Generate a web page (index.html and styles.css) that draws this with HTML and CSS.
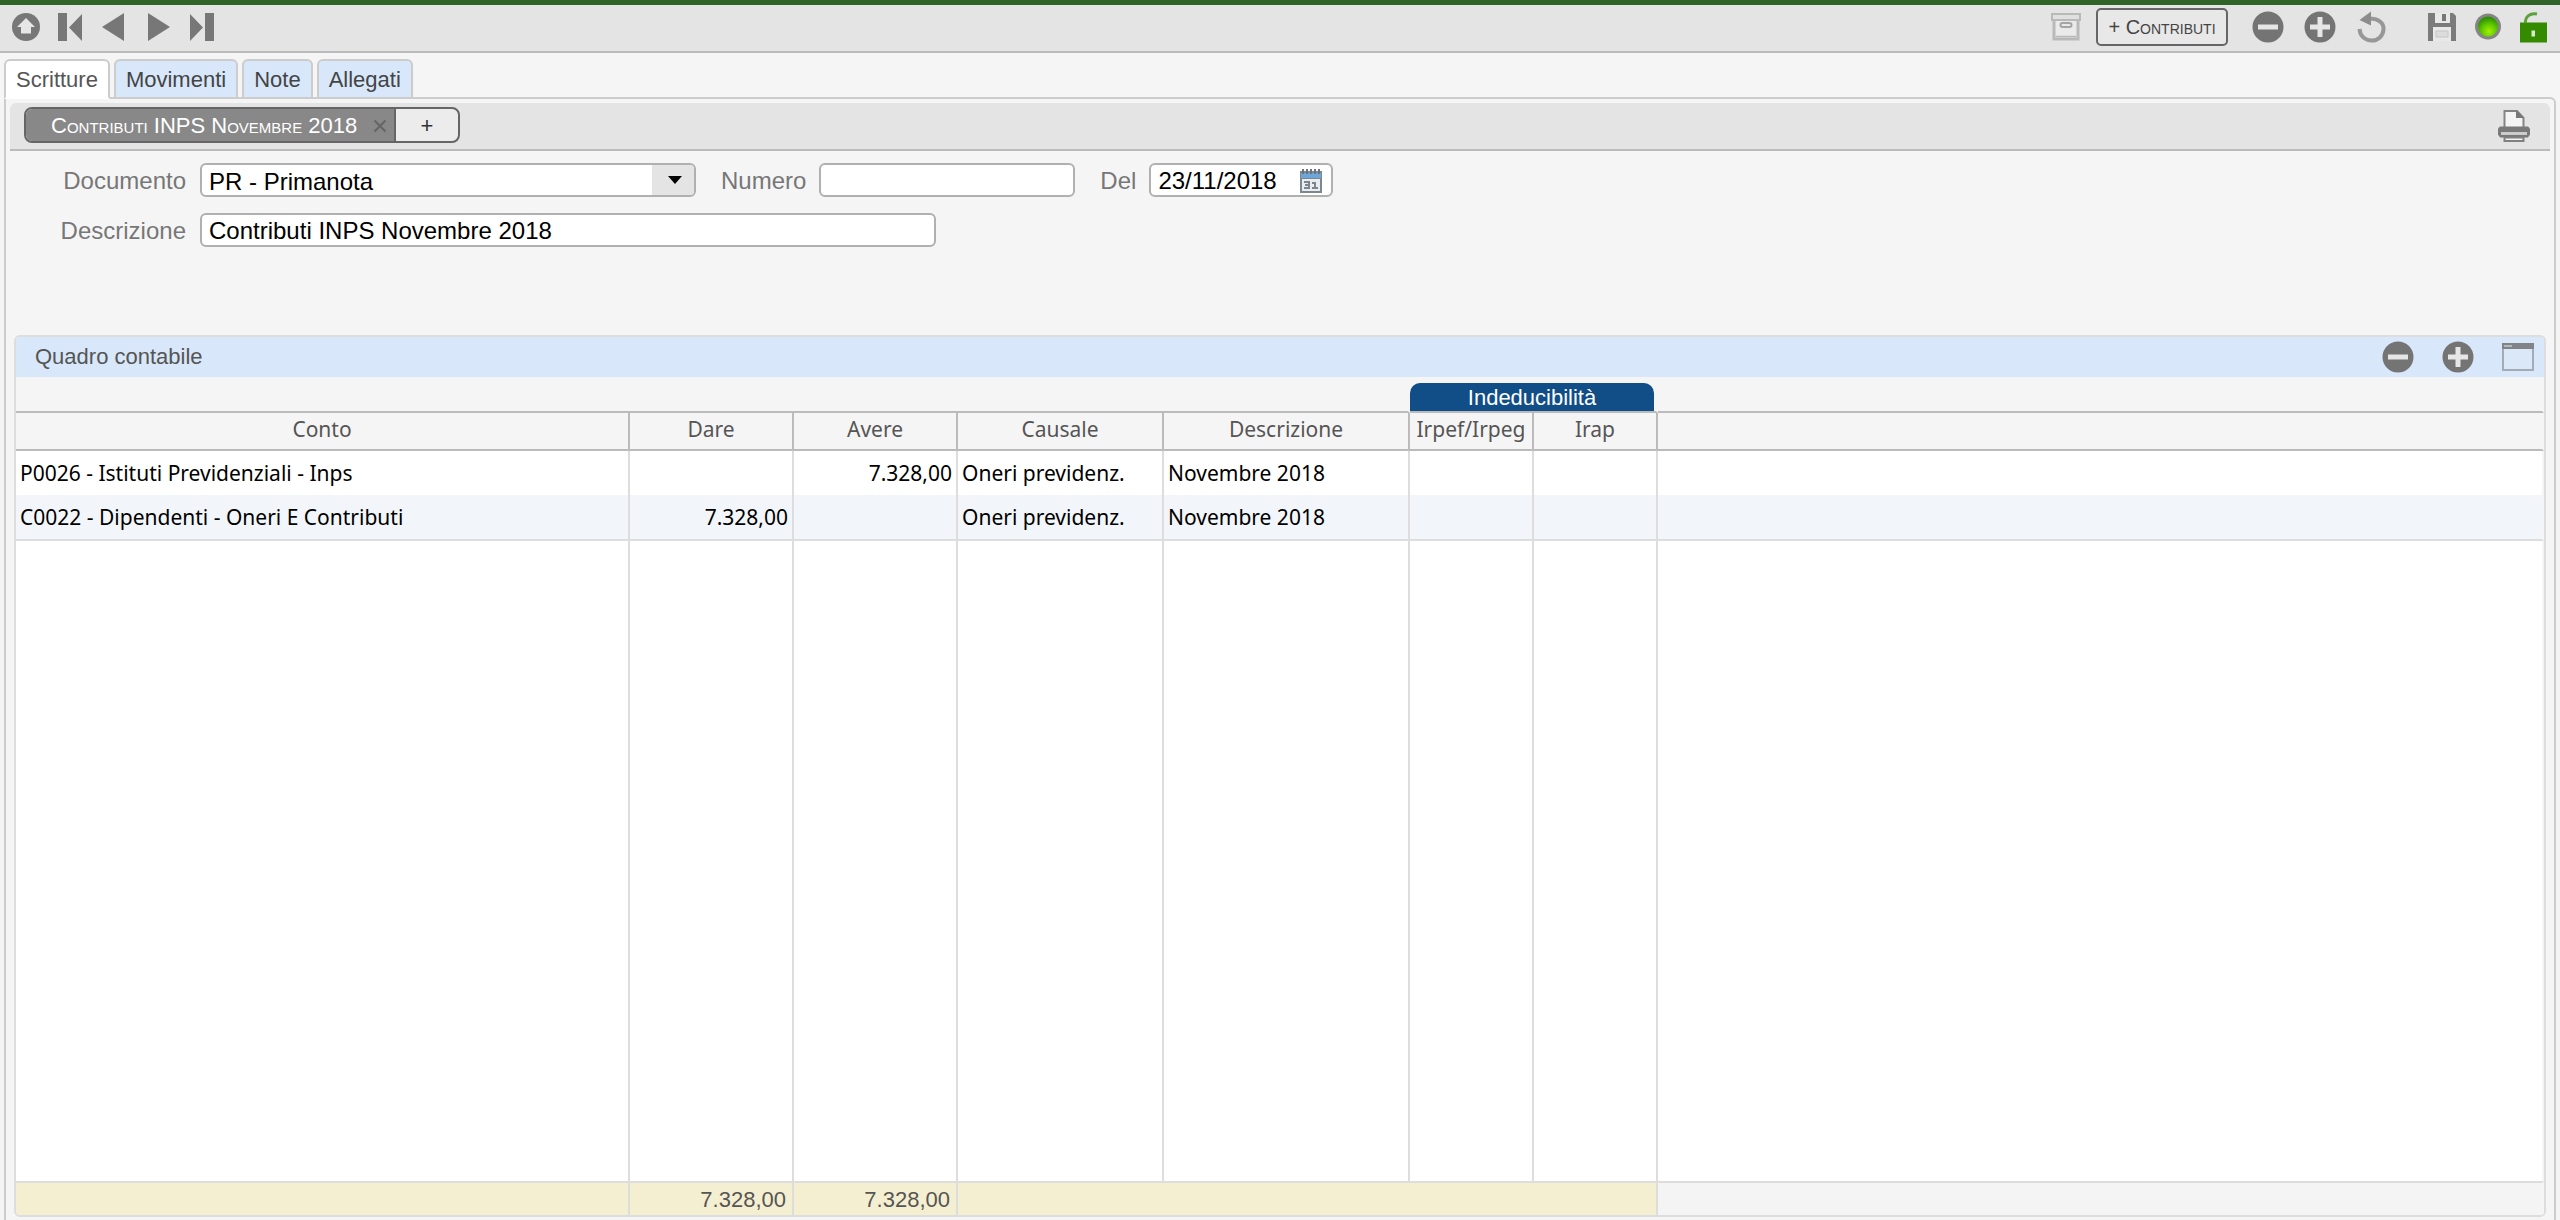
FILE: index.html
```html
<!DOCTYPE html>
<html lang="it">
<head>
<meta charset="utf-8">
<title>Prima nota</title>
<link rel="stylesheet" href="styles.css">
</head>
<body>
<svg class="symbols" aria-hidden="true">
  <symbol id="minus" viewBox="0 0 32 32"><circle cx="16" cy="16" r="15.5" fill="#747474"/><path d="M6 13.500h20v5H6z" fill="#e6e6e6"/></symbol>
  <symbol id="plus" viewBox="0 0 32 32"><circle cx="16" cy="16" r="15.500" fill="#747474"/><path d="M13.500 6h5v7.500H26v5h-7.500V26h-5v-7.500H6v-5h7.500z" fill="#e6e6e6"/></symbol>
</svg>
<div class="topline"></div>
<header class="toolbar">
  <nav class="nav-buttons" aria-label="Navigazione">
    <button class="icon-button" aria-label="Su"><svg class="icon-nav" viewBox="0 0 28 28"><circle cx="14" cy="14" r="14" fill="#777"/><path d="M14 5l9 9h-4v6.500H9V14H5z" fill="#e6e6e6"/></svg></button>
    <button class="icon-button" aria-label="Primo"><svg class="icon-nav" viewBox="0 0 28 28" fill="#777"><path d="M2 0h9v28H2zM26 1v27L13 14.500z"/></svg></button>
    <button class="icon-button" aria-label="Precedente"><svg class="icon-nav" viewBox="0 0 28 28" fill="#777"><path d="M24 0v28L2 14z"/></svg></button>
    <button class="icon-button" aria-label="Successivo"><svg class="icon-nav" viewBox="0 0 28 28" fill="#777"><path d="M4 0v28l22-14z"/></svg></button>
    <button class="icon-button" aria-label="Ultimo"><svg class="icon-nav" viewBox="0 0 28 28" fill="#777"><path d="M17 0h9v28h-9zM2 1v27l13-13.500z"/></svg></button>
  </nav>
  <div class="actions">
    <button class="icon-button" aria-label="Archivio"><svg class="icon" viewBox="0 0 32 32" fill="none" stroke="#b9b9b9"><path d="M2 3h28v6H2z" stroke-width="2" fill="#e0e0e0"/><path d="M4 10v18h24V10" stroke-width="3" fill="#eaeaea"/><path d="M6 25.500h20" stroke-width="1.500"/><rect x="10.500" y="12" width="11" height="4" rx="2" stroke="#a5a5a5" stroke-width="2"/></svg></button>
    <button class="text-button">+ Contributi</button>
    <div class="action-group">
      <button class="icon-button" aria-label="Rimuovi"><svg class="icon"><use href="#minus"/></svg></button>
      <button class="icon-button" aria-label="Aggiungi"><svg class="icon"><use href="#plus"/></svg></button>
      <button class="icon-button" aria-label="Annulla"><svg class="icon" viewBox="0 0 32 32"><path d="M13 7.500c9 0 15 4 14.500 11C27 25 22 29.500 16 29.500 9 29.500 4 25 3.500 18" fill="none" stroke="#979797" stroke-width="4"/><path d="M3.500 9L15 .5v14z" fill="#8c8c8c"/></svg></button>
    </div>
    <div class="status-group">
      <button class="icon-button" aria-label="Salva"><svg class="icon" viewBox="0 0 32 32"><path d="M2 2h25l3 3v25H2z" fill="#7b7b7b"/><path d="M9 2h15v10H9zM7 16h18v14H7z" fill="#e8e8e8"/><path d="M16 3h4v7h-4z" fill="#777"/><path d="M10 20h12v6H10z" fill="#dcdcdc" stroke="#c4c4c4"/></svg></button>
      <button class="icon-button" aria-label="Stato"><svg class="icon" viewBox="0 0 32 32"><defs><radialGradient id="led" cx=".55" cy=".75" r=".7"><stop offset="0" stop-color="#a4f000"/><stop offset=".5" stop-color="#62cb00"/><stop offset="1" stop-color="#2d8f05"/></radialGradient></defs><circle cx="16" cy="15.500" r="13" fill="#858585"/><circle cx="16" cy="15.500" r="10" fill="url(#led)"/></svg></button>
      <button class="icon-button" aria-label="Sbloccato"><svg class="icon" viewBox="0 0 32 32"><path d="M2 11.500h27v20H2z" fill="#358b00"/><path d="M7.500 12C7 6 12 1.500 19 3" fill="none" stroke="#5ba03a" stroke-width="3"/><path d="M13.500 19.500h3.500v6h-3.500z" fill="#d8e8cf"/></svg></button>
    </div>
  </div>
</header>

<nav class="tabs" aria-label="Sezioni">
  <a class="tab tab-active" href="#scritture">Scritture</a>
  <a class="tab" href="#movimenti">Movimenti</a>
  <a class="tab" href="#note">Note</a>
  <a class="tab" href="#allegati">Allegati</a>
</nav>

<main class="panel" id="scritture">
  <div class="entry-bar">
    <div class="segments">
      <button class="segment segment-active"><span>Contributi INPS Novembre 2018</span><svg class="close" viewBox="0 0 14 14"><path d="M1.500 1.500l11 11M12.500 1.500l-11 11" stroke="#656565" stroke-width="2"/></svg></button>
      <button class="segment segment-add">+</button>
    </div>
    <button class="icon-button" aria-label="Stampa"><svg class="icon" viewBox="0 0 32 32"><path d="M6.500 17V1H19l6.500 7v9" fill="#f4f4f4" stroke="#848484" stroke-width="2"/><path d="M18 0l8 8h-8z" fill="#777"/><path d="M2 16.500h28l2 2v6l-2 3H2l-2-3v-6z" fill="#797979"/><path d="M3 22h26v3H3z" fill="#ccc"/><path d="M6.500 27.500h19V31h-19z" fill="#f4f4f4" stroke="#808080" stroke-width="2"/></svg></button>
  </div>

  <form class="form">
    <div class="form-row">
      <label class="label label-first" for="documento">Documento</label>
      <div class="field field-document">
        <select id="documento" class="control"><option>PR - Primanota</option></select>
        <span class="arrow"><svg class="arrow-icon" viewBox="0 0 14 8"><path d="M0 0h14L7 8z"/></svg></span>
      </div>
      <label class="label" for="numero">Numero</label>
      <div class="field field-number"><input id="numero" class="control" type="text"></div>
      <label class="label" for="data">Del</label>
      <div class="field field-date">
        <input id="data" class="control" type="text" value="23/11/2018">
        <button type="button" class="icon-button calendar" aria-label="Calendario"><svg class="calendar-icon" viewBox="0 0 24 24"><path d="M1 2h22v22H1z" fill="#7d8790"/><path d="M2 4h20v5H2z" fill="#6ba6d8"/><path d="M3 10h18v12H3z" fill="#e9edf0"/><path d="M4 0v5M8 0v5M12 0v5M16 0v5M20 0v5" stroke="#68737d" stroke-width="2"/><path d="M5 13h5v6H5M6 16h4M13 14h3v5M13 19h6" fill="none" stroke="#7d858d" stroke-width="2"/></svg></button>
      </div>
    </div>
    <div class="form-row">
      <label class="label label-first" for="descrizione">Descrizione</label>
      <div class="field field-description"><input id="descrizione" class="control" type="text" value="Contributi INPS Novembre 2018"></div>
    </div>
  </form>

  <section class="card">
    <div class="card-header">
      <h2 class="card-title">Quadro contabile</h2>
      <div class="card-actions">
        <button class="icon-button" aria-label="Rimuovi riga"><svg class="icon"><use href="#minus"/></svg></button>
        <button class="icon-button" aria-label="Aggiungi riga"><svg class="icon"><use href="#plus"/></svg></button>
        <button class="icon-button" aria-label="Ingrandisci"><svg class="icon" viewBox="0 0 32 32"><path d="M1 3h30v26H1z" fill="#dbe8f7" stroke="#a3acb6" stroke-width="2"/><path d="M0 2h32v6H0z" fill="#808488"/><path d="M2 4h8v2H2z" fill="#b4b9be"/></svg></button>
      </div>
    </div>
    <div class="table-area">
      <table class="ledger">
        <colgroup><col class="col-account"><col class="col-amount"><col class="col-amount"><col class="col-reason"><col class="col-description"><col class="col-tax"><col class="col-tax"><col></colgroup>
        <thead>
          <tr class="group-row"><td colspan="5"></td><th colspan="2" scope="colgroup"><span class="group-label">Indeducibilità</span></th><td></td></tr>
          <tr class="head-row"><th scope="col">Conto</th><th scope="col">Dare</th><th scope="col">Avere</th><th scope="col">Causale</th><th scope="col">Descrizione</th><th scope="col">Irpef/Irpeg</th><th scope="col">Irap</th><td></td></tr>
        </thead>
        <tbody>
          <tr class="row"><td>P0026 - Istituti Previdenziali - Inps</td><td class="num"></td><td class="num">7.328,00</td><td>Oneri previdenz.</td><td>Novembre 2018</td><td></td><td></td><td></td></tr>
          <tr class="row row-alt"><td>C0022 - Dipendenti - Oneri E Contributi</td><td class="num">7.328,00</td><td class="num"></td><td>Oneri previdenz.</td><td>Novembre 2018</td><td></td><td></td><td></td></tr>
          <tr class="filler"><td></td><td></td><td></td><td></td><td></td><td></td><td></td><td></td></tr>
        </tbody>
        <tfoot>
          <tr class="total-row"><td></td><td class="num">7.328,00</td><td class="num">7.328,00</td><td class="total-rest" colspan="4"></td><td class="blank"></td></tr>
        </tfoot>
      </table>
    </div>
  </section>
</main>
</body>
</html>
```

FILE: styles.css
```css
* { box-sizing: border-box; }

body {
  margin: 0;
  height: 100vh;
  min-height: 640px;
  display: flex;
  flex-direction: column;
  background: #f5f5f5;
  color: #555;
  font-family: "Liberation Sans", Arial, sans-serif;
  font-size: 22px;
}

button, input, select { font: inherit; color: inherit; }

.symbols { display: none; }

.icon-button {
  display: flex;
  padding: 0;
  border: 0;
  background: none;
}

.icon { display: block; width: 32px; height: 32px; }
.icon-nav { display: block; width: 28px; height: 28px; }

.topline { flex: none; height: 5px; background: #2f6327; }

/* Main toolbar */
.toolbar {
  flex: none;
  display: flex;
  justify-content: space-between;
  align-items: center;
  height: 48px;
  padding: 0 10px 2px 12px;
  border-bottom: 2px solid #bbb;
  background: #e4e4e4;
}

.nav-buttons { display: flex; gap: 16px; }
.actions { display: flex; align-items: center; }
.action-group { display: flex; gap: 20px; margin: 0 38px 0 24px; }
.status-group { display: flex; gap: 14px; }

.text-button {
  width: 132px;
  height: 38px;
  margin-left: 14px;
  padding: 0;
  border: 2px solid #666;
  border-radius: 5px;
  background: #e8e8e8;
  color: #444;
  font-size: 20px;
  font-variant: small-caps;
}

/* Tabs */
.tabs {
  flex: none;
  position: relative;
  display: flex;
  gap: 4px;
  margin: 6px 0 -2px 4px;
}

.tab {
  height: 40px;
  padding: 0 10px;
  border: 2px solid #ccc;
  border-radius: 6px 6px 0 0;
  background: #d8e8fa;
  color: #444;
  line-height: 38px;
  text-decoration: none;
}

.tab-active {
  border-bottom-color: #fff;
  background: #fff;
  color: #555;
}

/* Panel */
.panel {
  flex: 1;
  min-height: 0;
  display: flex;
  flex-direction: column;
  margin: 0 4px;
  padding: 4px 4px 3px;
  border: 2px solid #ccc;
  border-bottom: 0;
  border-radius: 0 6px 0 0;
}

.entry-bar {
  flex: none;
  display: flex;
  justify-content: space-between;
  align-items: center;
  height: 48px;
  padding: 0 20px 0 14px;
  border-bottom: 2px solid #bbb;
  border-radius: 6px 6px 0 0;
  background: #e4e4e4;
}

.segments {
  display: flex;
  height: 36px;
  margin-bottom: 2px;
  border: 2px solid #666;
  border-radius: 8px;
  background: #ececec;
  overflow: hidden;
}

.segment { padding: 2px 0 0; border: 0; background: none; }

.segment-active {
  display: flex;
  align-items: center;
  justify-content: space-between;
  width: 370px;
  padding: 2px 7px 0 25px;
  border-right: 2px solid #666;
  background: #888;
  color: #fff;
  font-variant: small-caps;
  white-space: nowrap;
}

.close { width: 14px; height: 14px; }
.segment-add { width: 62px; color: #333; }

/* Form */
.form {
  flex: none;
  display: flex;
  flex-direction: column;
  gap: 16px;
  padding: 12px 0 88px;
  font-size: 24px;
}

.form-row { display: flex; align-items: center; }

.label {
  padding: 2px 13px 0 25px;
  color: #777;
}

.label-first {
  width: 190px;
  padding: 2px 14px 0 0;
  text-align: right;
}

.field {
  display: flex;
  height: 34px;
  border: 2px solid #b0b0b0;
  border-radius: 6px;
  background: #fff;
  overflow: hidden;
}

.field-document { width: 496px; }
.field-number { width: 256px; }
.field-date { width: 184px; }
.field-description { width: 736px; }

.control {
  flex: 1;
  min-width: 0;
  padding: 2px 0 0 7px;
  border: 0;
  outline: 0;
  background: none;
  color: #000;
  appearance: none;
}

.arrow {
  display: flex;
  align-items: center;
  justify-content: center;
  width: 42px;
  padding-left: 4px;
  background: #e4e4e4;
}

.arrow-icon { width: 14px; height: 8px; }
.calendar { align-items: center; padding: 2px 8px 0 0; }
.calendar-icon { width: 24px; height: 24px; }

/* Accounting card */
.card {
  flex: 1;
  min-height: 0;
  display: flex;
  flex-direction: column;
  margin: 0 4px;
  border: 2px solid #ddd;
  border-radius: 6px;
  overflow: hidden;
}

.card-header {
  flex: none;
  display: flex;
  justify-content: space-between;
  align-items: center;
  height: 40px;
  padding: 0 10px 0 19px;
  background: #d8e8fa;
}

.card-title {
  margin: 0;
  font-size: 22px;
  font-weight: 400;
}

.card-actions { display: flex; gap: 28px; }
.table-area { flex: 1; min-height: 0; }

/* Ledger */
.ledger {
  width: 100%;
  height: 100%;
  table-layout: fixed;
  border-spacing: 0;
  font-family: "Noto Sans", sans-serif;
  font-size: 21px;
}

.col-account { width: 614px; }
.col-amount { width: 164px; }
.col-reason { width: 206px; }
.col-description { width: 246px; }
.col-tax { width: 124px; }

.ledger th, .ledger td {
  padding: 0 4px;
  border-right: 2px solid #ddd;
  line-height: 28px;
  white-space: nowrap;
}

.ledger th { font-weight: 400; }
.ledger td:last-child { border-right-color: #f5f5f5; }
.ledger .num { text-align: right; }

.group-row { height: 36px; }

.ledger .group-row th, .ledger .group-row td {
  padding: 6px 2px 0 0;
  border-right-color: #f5f5f5;
  border-bottom: 2px solid #bbb;
}

.group-label {
  display: block;
  padding-top: 2px;
  border-radius: 10px 10px 0 0;
  background: #114d87;
  color: #fff;
  font-family: "Liberation Sans", Arial, sans-serif;
  font-size: 22px;
  line-height: 26px;
}

.head-row { height: 38px; }

.ledger .head-row th, .ledger .head-row td {
  padding-bottom: 4px;
  border-right-color: #bbb;
  border-bottom: 2px solid #bbb;
}

.ledger .head-row td { border-right-color: #f5f5f5; }

.row { height: 44px; background: #fff; color: #000; }
.row-alt { height: 46px; background: #f2f6fb; }
.ledger .row-alt td { border-bottom: 2px solid #ddd; }
.filler { background: #fff; }

.total-row {
  height: 34px;
  background: #f5efd2;
  font-family: "Liberation Sans", Arial, sans-serif;
  font-size: 22px;
}

.ledger .total-row td {
  padding: 2px 6px 0;
  border-top: 2px solid #ddd;
}

.ledger .total-row .blank { background: #f4f4f4; }
```
